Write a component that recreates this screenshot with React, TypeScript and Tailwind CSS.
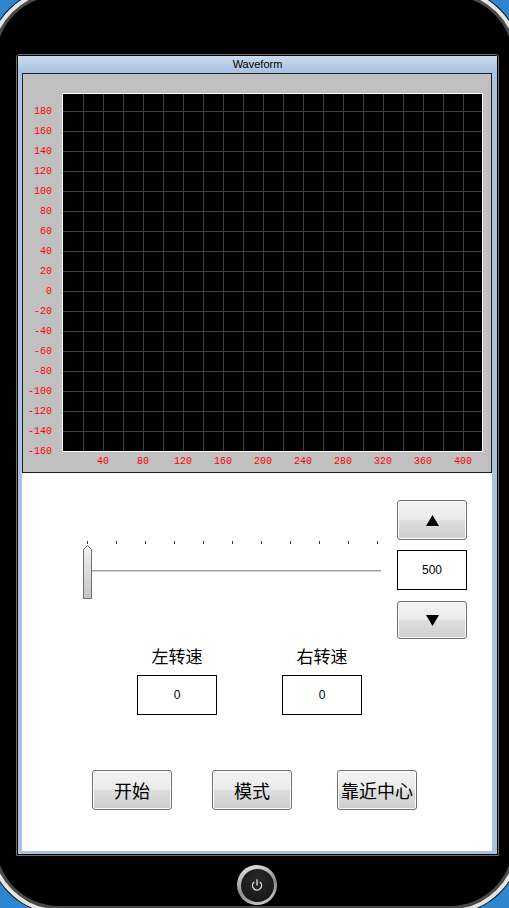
import React from 'react';
import { Power } from 'lucide-react';

const cjk = "font-['Noto_Sans_CJK_SC','Noto_Sans',sans-serif]";
const latin = "font-['Liberation_Sans',Arial,sans-serif]";

const btn =
  'flex items-center justify-center rounded-[3px] border border-[#707070] shadow-[inset_0_0_0_1px_#fbfbfb] bg-[linear-gradient(#f3f3f3_0%,#ebebeb_48%,#dddddd_52%,#cfcfcf_100%)]';

const yLabels = Array.from({ length: 18 }, (_, i) => 180 - i * 20);
const xLabels = Array.from({ length: 10 }, (_, i) => (i + 1) * 40);

// the oscilloscope style plot with its axis labels
const WaveChart: React.FC = () => (
  <svg width={468} height={398} className="block">
    <rect x={39} y={19} width={421} height={359} fill="#000" />
    {Array.from({ length: 20 }, (_, k) => (
      <line key={'v' + k} x1={60.5 + 20 * k} y1={20} x2={60.5 + 20 * k} y2={377} stroke="#404040" strokeWidth={1} />
    ))}
    {Array.from({ length: 17 }, (_, k) => (
      <line key={'h' + k} x1={40} y1={37.5 + 20 * k} x2={459} y2={37.5 + 20 * k} stroke="#404040" strokeWidth={1} />
    ))}
    <rect x={39.5} y={19.5} width={420} height={358} fill="none" stroke="#fff" strokeWidth={1} />
    {yLabels.map((v, i) => (
      <text
        key={v}
        x={29}
        y={37.5 + 20 * i}
        textAnchor="end"
        dominantBaseline="middle"
        fontFamily="'Liberation Mono', monospace"
        fontSize={10}
        fill="#ff0000"
      >
        {v}
      </text>
    ))}
    {xLabels.map((v) => (
      <text
        key={v}
        x={40 + v}
        y={387.5}
        textAnchor="middle"
        dominantBaseline="middle"
        fontFamily="'Liberation Mono', monospace"
        fontSize={10}
        fill="#ff0000"
      >
        {v}
      </text>
    ))}
  </svg>
);

const Slider: React.FC = () => (
  <svg width={305} height={60} className="block">
    <defs>
      <linearGradient id="thumb" x1="0" y1="0" x2="0" y2="1">
        <stop offset="0" stopColor="#f4f4f4" />
        <stop offset="1" stopColor="#c4c4c4" />
      </linearGradient>
    </defs>
    {Array.from({ length: 11 }, (_, k) => (
      <rect key={k} x={7 + 29 * k} y={1} width={1} height={3} fill="#333" />
    ))}
    <rect x={11} y={30} width={290} height={1} fill="#9c9c9c" />
    <rect x={11} y={31} width={290} height={1} fill="#d6d6d6" />
    <polygon points="3.5,9.5 7.5,5.5 11.5,9.5 11.5,58.5 3.5,58.5" fill="url(#thumb)" stroke="#6e6e6e" strokeWidth={1} />
  </svg>
);

const Tri: React.FC<{ down?: boolean }> = ({ down }) => (
  <svg width={13} height={11}>
    <polygon points={down ? '0,0 13,0 6.5,11' : '6.5,0 13,11 0,11'} fill="#000" />
  </svg>
);

export default function App() {
  return (
    <div className="w-[509px] h-[908px] overflow-hidden bg-[#2f86d0]">
      <div className="-mx-[11px] -mt-[11px] h-[924px] rounded-[70px] border-[4px] border-[#e4e4e4] bg-black pl-[23px] pt-[61px] shadow-[0_0_0_1px_#111,inset_0_0_0_3px_#4a4a4a]">
        {/* window */}
        <div className="w-[483px] h-[802px] border border-[#6e6e6e] bg-black p-px rounded-t-[3px]">
          <div className="flex h-full flex-col bg-[#a9c2df] pb-[3px] rounded-t-[2px]">
            <div className={`flex h-[17px] items-center justify-center bg-[linear-gradient(#cadbef,#a6c0df)] text-[11px] text-black ${latin}`}>
              Waveform
            </div>
            <div className="ml-[4px] mr-[5px] flex-1 bg-white">
              <div className="h-[400px] border border-[#1e1e1e] bg-[#c0c0c0]">
                <WaveChart />
              </div>

              {/* slider and value stepper */}
              <div className="mt-[27px] flex items-start">
                <div className="ml-[58px] mt-[40px]">
                  <Slider />
                </div>
                <div className="ml-[12px] flex w-[70px] flex-col">
                  <button className={`${btn} h-[40px]`}>
                    <Tri />
                  </button>
                  <div className={`mt-[10px] flex h-[40px] items-center justify-center border border-black text-[12px] ${latin}`}>
                    500
                  </div>
                  <button className={`${btn} mt-[11px] h-[38px]`}>
                    <Tri down />
                  </button>
                </div>
              </div>

              {/* wheel speeds */}
              <div className="ml-[115px] mt-[7px] flex gap-[65px]">
                {['左转速', '右转速'].map((t) => (
                  <div key={t} className="flex w-[80px] flex-col items-center">
                    <div className={`text-[17px] leading-[20px] text-black ${cjk}`}>{t}</div>
                    <div className={`mt-[9px] flex h-[40px] w-[80px] items-center justify-center border border-black text-[12px] ${latin}`}>
                      0
                    </div>
                  </div>
                ))}
              </div>

              {/* actions */}
              <div className={`ml-[70px] mt-[55px] flex text-[18px] text-black ${cjk}`}>
                <button className={`${btn} h-[40px] w-[80px]`}>开始</button>
                <button className={`${btn} ml-[40px] h-[40px] w-[80px]`}>模式</button>
                <button className={`${btn} ml-[45px] h-[40px] w-[80px]`}>靠近中心</button>
              </div>
            </div>
          </div>
        </div>

        {/* power button */}
        <div className="ml-[221px] mt-[9px] flex h-[40px] w-[40px] items-center justify-center rounded-full bg-[linear-gradient(160deg,#f4f4f4,#8a8a8a_55%,#d8d8d8)]">
          <div className="flex h-[33px] w-[33px] items-center justify-center rounded-full bg-[radial-gradient(circle_at_50%_35%,#2a2a2a,#111)]">
            <Power size={12} strokeWidth={2.6} color="#e6e6e6" />
          </div>
        </div>
      </div>
    </div>
  );
}
